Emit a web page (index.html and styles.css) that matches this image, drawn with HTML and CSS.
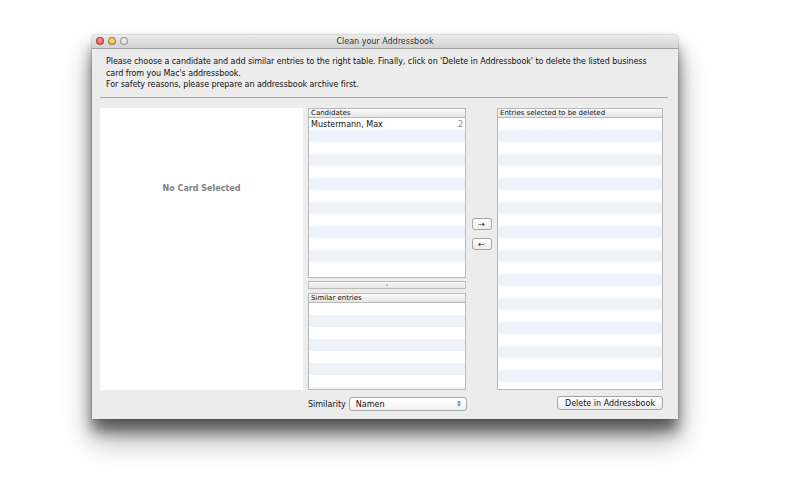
FILE: index.html
```html
<!DOCTYPE html>
<html lang="en">
<head>
    <meta charset="UTF-8">
    <title>Clean your Addressbook</title>
    <link rel="stylesheet" href="styles.css">
</head>
<body>
<div class="window">
    <div class="titlebar">
        <div class="lights">
            <span class="light close"></span>
            <span class="light min"></span>
            <span class="light zoom"></span>
        </div>
        <div class="title">Clean your Addressbook</div>
    </div>
    <div class="content">
        <p class="intro">Please choose a candidate and add similar entries to the right table. Finally, click on 'Delete in Addressbook' to delete the listed business card from you Mac's addressbook.<br>For safety reasons, please prepare an addressbook archive first.</p>
        <div class="rule"></div>
        <div class="main">
            <div class="card">No Card Selected</div>
            <div class="middle">
                <div class="table candidates">
                    <div class="head">Candidates</div>
                    <ul class="rows">
                        <li><span>Mustermann, Max</span><span class="count">2</span></li>
                        <li></li><li></li><li></li><li></li><li></li><li></li>
                        <li></li><li></li><li></li><li></li><li></li><li></li>
                    </ul>
                </div>
                <div class="splitter"><span></span></div>
                <div class="table similar">
                    <div class="head">Similar entries</div>
                    <ul class="rows">
                        <li></li><li></li><li></li><li></li><li></li><li></li><li></li><li></li>
                    </ul>
                </div>
            </div>
            <div class="arrows">
                <button class="arrow">&rarr;</button>
                <button class="arrow">&larr;</button>
            </div>
            <div class="table selected">
                <div class="head">Entries selected to be deleted</div>
                <ul class="rows">
                    <li></li><li></li><li></li><li></li><li></li><li></li><li></li><li></li>
                    <li></li><li></li><li></li><li></li><li></li><li></li><li></li><li></li>
                    <li></li><li></li><li></li><li></li><li></li><li></li><li></li>
                </ul>
            </div>
        </div>
        <div class="bottom">
            <div class="similarity">
                <label>Similarity</label>
                <div class="popup"><span>Namen</span><span class="updown">&#8661;</span></div>
            </div>
            <button class="delete">Delete in Addressbook</button>
        </div>
    </div>
</div>
</body>
</html>
```

FILE: styles.css
```css
* {
    margin: 0;
    padding: 0;
    box-sizing: border-box;
}

html, body {
    height: 100%;
}

body {
    background: #fff;
    font-family: "DejaVu Sans", "Liberation Sans", sans-serif;
    font-size: 8px;
    color: #111;
    padding-top: 35px;
}

.window {
    width: 586px;
    height: 384px;
    margin-left: 92px;
    background: #ececec;
    border-radius: 4px 4px 0 0;
    box-shadow: 0 12px 14px rgba(0, 0, 0, 0.5), 0 20px 30px rgba(0, 0, 0, 0.35), 0 0 2px rgba(0, 0, 0, 0.4);
    display: flex;
    flex-direction: column;
}

.titlebar {
    position: relative;
    height: 14px;
    flex: none;
    background: linear-gradient(#ebebeb, #d2d2d2);
    border-bottom: 1px solid #9e9e9e;
    border-radius: 4px 4px 0 0;
}

.lights {
    position: absolute;
    left: 4px;
    top: 2px;
    display: flex;
    gap: 4px;
}

.light {
    width: 8px;
    height: 8px;
    border-radius: 50%;
    border: 1px solid rgba(0, 0, 0, 0.3);
}

.light.close { background: radial-gradient(circle at 50% 35%, #ff9a8a, #e0443a); }
.light.min { background: radial-gradient(circle at 50% 35%, #ffe08a, #dca12a); }
.light.zoom { background: radial-gradient(circle at 50% 35%, #f4f4f4, #cfcfcf); }

.title {
    text-align: center;
    line-height: 13px;
    color: #333;
}

.content {
    flex: 1;
    display: flex;
    flex-direction: column;
    padding: 0 15px 8px 8px;
}

.intro {
    padding: 7px 0 0 6px;
    line-height: 11.5px;
    height: 48px;
    flex: none;
    letter-spacing: -0.07px;
}

.rule {
    height: 1px;
    flex: none;
    background: #a8a8a8;
    margin-right: -5px;
    margin-bottom: 10px;
}

.main {
    display: flex;
    height: 282px;
    flex: none;
}

.card {
    width: 203px;
    background: #fff;
    display: flex;
    justify-content: center;
    color: #7f7f7f;
    font-weight: bold;
    margin-right: 5px;
    padding-top: 76px;
}

.middle {
    width: 158px;
    display: flex;
    flex-direction: column;
}

.table {
    background: #fff;
    border: 1px solid #b8b8b8;
    display: flex;
    flex-direction: column;
    overflow: hidden;
}

.candidates { height: 170px; flex: none; }

.similar { flex: 1; }

.head {
    height: 9px;
    flex: none;
    background: linear-gradient(#fbfbfb, #e4e4e4);
    border-bottom: 1px solid #b8b8b8;
    font-size: 7px;
    line-height: 8px;
    padding-left: 2px;
}

.rows {
    list-style: none;
}

.rows li {
    height: 12px;
    line-height: 13px;
    padding: 0 2px;
    display: flex;
    justify-content: space-between;
}

.rows li:nth-child(even) {
    background: #eef2f9;
}

.count {
    color: #888;
}

.splitter {
    height: 8px;
    flex: none;
    margin: 3px 0 4px;
    border: 1px solid #bdbdbd;
    background: linear-gradient(#f7f7f7, #e6e6e6);
    display: flex;
    align-items: center;
    justify-content: center;
}

.splitter span {
    width: 2px;
    height: 2px;
    border-radius: 50%;
    background: #aaa;
}

.arrows {
    width: 31px;
    display: flex;
    flex-direction: column;
    align-items: center;
    justify-content: center;
    gap: 8px;
    padding-bottom: 30px;
}

.arrow {
    width: 20px;
    height: 12px;
    border: 1px solid #a5a5a5;
    border-radius: 3px;
    background: linear-gradient(#ffffff, #ececec);
    font-family: "DejaVu Sans", sans-serif;
    font-size: 8px;
    line-height: 9px;
    color: #222;
}

.selected {
    width: 166px;
}

.bottom {
    display: flex;
    justify-content: space-between;
    align-items: center;
    padding: 6px 0 0 208px;
}

.similarity {
    display: flex;
    align-items: center;
    gap: 3px;
    font-size: 8px;
}

.popup {
    width: 118px;
    height: 14px;
    border: 1px solid #a9a9a9;
    border-radius: 3px;
    background: linear-gradient(#ffffff, #f0f0f0);
    display: flex;
    justify-content: space-between;
    align-items: center;
    padding: 0 4px 0 6px;
}

.updown {
    font-size: 7px;
    color: #444;
}

.delete {
    width: 106px;
    height: 14px;
    border: 1px solid #a5a5a5;
    border-radius: 3px;
    background: linear-gradient(#ffffff, #ececec);
    font-family: "DejaVu Sans", sans-serif;
    font-size: 8px;
    color: #111;
    margin-bottom: 2px;
}
```
